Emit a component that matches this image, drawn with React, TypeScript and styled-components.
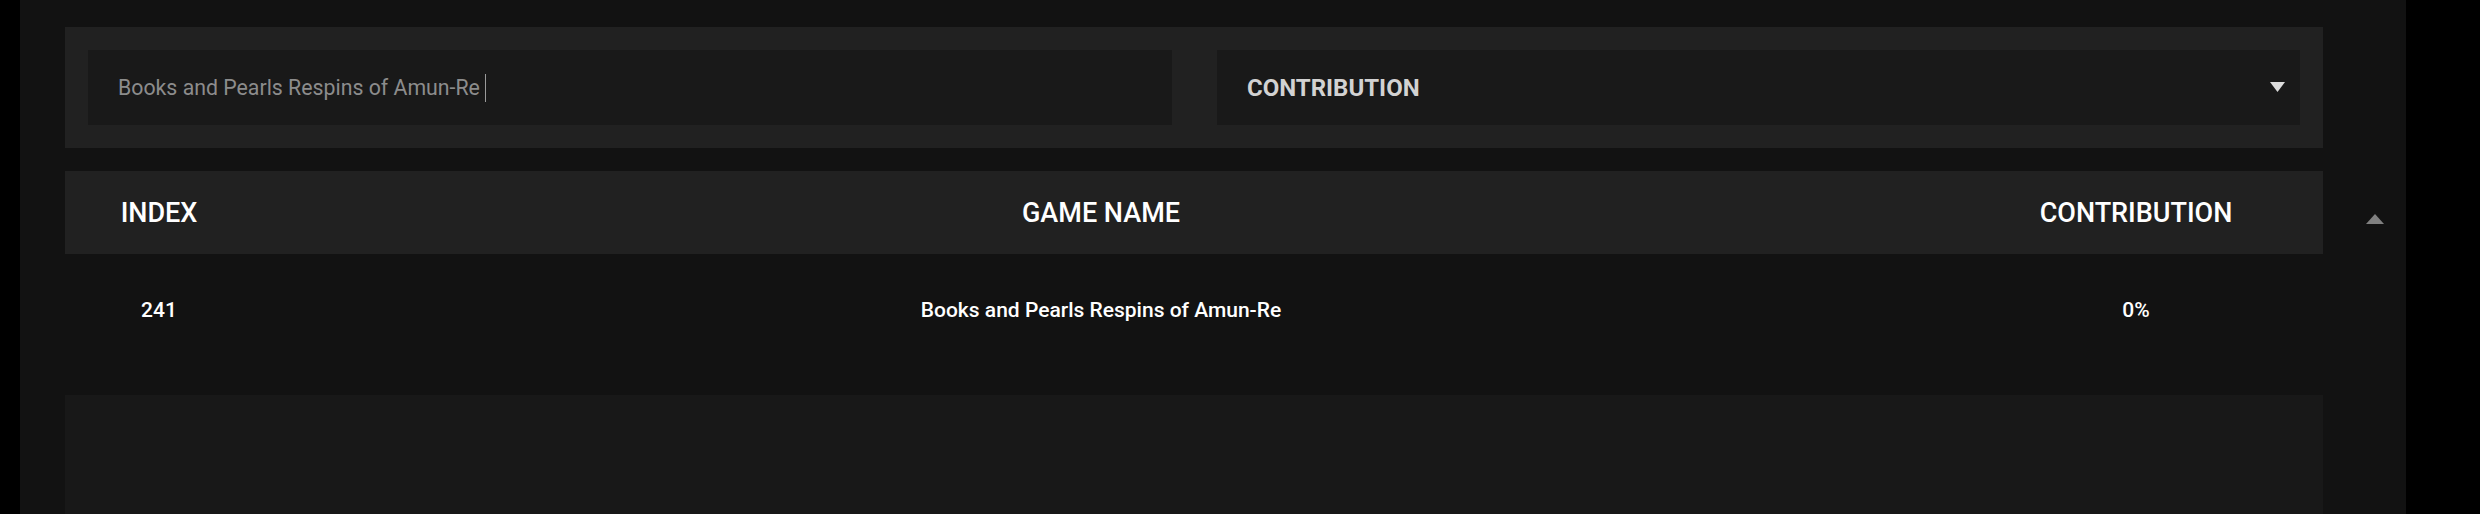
import React from 'react';
import styled, { createGlobalStyle } from 'styled-components';

interface GameRow {
  index: number;
  name: string;
  contribution: string;
}

const rows: GameRow[] = [
  { index: 241, name: 'Books and Pearls Respins of Amun-Re', contribution: '0%' },
];

const GlobalStyle = createGlobalStyle`
  html, body {
    margin: 0;
    padding: 0;
    background: #000;
    font-family: Roboto, "Liberation Sans", sans-serif;
    overflow: hidden;
  }
`;

const Triangle: React.FC<{ up?: boolean; width: number; color: string }> = ({
  up,
  width,
  color,
}) => (
  <svg width={width} height={10} viewBox={`0 0 ${width} 10`}>
    <polygon
      points={up ? `0,10 ${width / 2},0 ${width},10` : `0,0 ${width},0 ${width / 2},10`}
      fill={color}
    />
  </svg>
);

export default function App() {
  return (
    <>
      <GlobalStyle />
      <Page>
        <Panel>
          <FilterBar>
            <SearchField>
              <span>Books and Pearls Respins of Amun-Re</span>
              <Caret />
            </SearchField>
            <SelectBox>
              <span>CONTRIBUTION</span>
              <Triangle width={15} color="#dcdcdc" />
            </SelectBox>
          </FilterBar>
          <Gutter />

          <TableHead>
            <HeadCell>INDEX</HeadCell>
            <HeadCell>GAME NAME</HeadCell>
            <HeadCell>CONTRIBUTION</HeadCell>
          </TableHead>
          <SortToggle>
            <Triangle up width={18} color="#808080" />
          </SortToggle>

          {rows.map((row) => (
            <TableRow key={row.index}>
              <Cell>{row.index}</Cell>
              <Cell>{row.name}</Cell>
              <Cell>{row.contribution}</Cell>
            </TableRow>
          ))}
          <Gutter />

          <EmptyArea />
        </Panel>
      </Page>
    </>
  );
}

const Page = styled.div`
  display: flex;
  padding-left: 20px;
  height: 514px;
  overflow: hidden;
`;

const Panel = styled.div`
  display: grid;
  grid-template-columns: 2258px 83px;
  grid-auto-rows: min-content;
  align-content: start;
  width: 2386px;
  padding: 27px 0 0 45px;
  box-sizing: border-box;
  background: #121212;
`;

const FilterBar = styled.div`
  display: flex;
  gap: 45px;
  padding: 23px;
  background: #212121;
  margin-bottom: 23px;
`;

const Gutter = styled.div``;

const FieldBase = styled.div`
  display: flex;
  align-items: center;
  height: 75px;
  box-sizing: border-box;
  background: #191919;
  padding-left: 30px;
`;

const SearchField = styled(FieldBase)`
  flex: 0 0 1084px;
  font-size: 21.3px;
  color: #8c8c8c;
`;

const Caret = styled.span`
  display: inline-block;
  width: 1px;
  height: 28px;
  margin-left: 5px;
  background: #9a9a9a;
`;

const SelectBox = styled(FieldBase)`
  flex: 1;
  justify-content: space-between;
  padding-right: 15px;
  font-weight: 700;
  font-size: 24px;
  color: #d2d2d2;

  svg {
    margin-top: -2px;
  }
`;

const TableHead = styled.div`
  display: grid;
  grid-template-columns: 188px 1fr 374px;
  align-items: center;
  height: 83px;
  background: #212121;
`;

const HeadCell = styled.div`
  text-align: center;
  font-size: 27px;
  font-weight: 500;
  color: #fff;
`;

const SortToggle = styled.div`
  display: flex;
  align-items: center;
  padding: 13px 0 0 43px;
`;

const TableRow = styled.div`
  display: grid;
  grid-template-columns: 188px 1fr 374px;
  align-items: center;
  height: 112px;
  margin-bottom: 29px;
`;

const Cell = styled.div`
  text-align: center;
  font-size: 21px;
  font-weight: 500;
  color: #fff;
`;

const EmptyArea = styled.div`
  height: 120px;
  background: #181818;
`;
